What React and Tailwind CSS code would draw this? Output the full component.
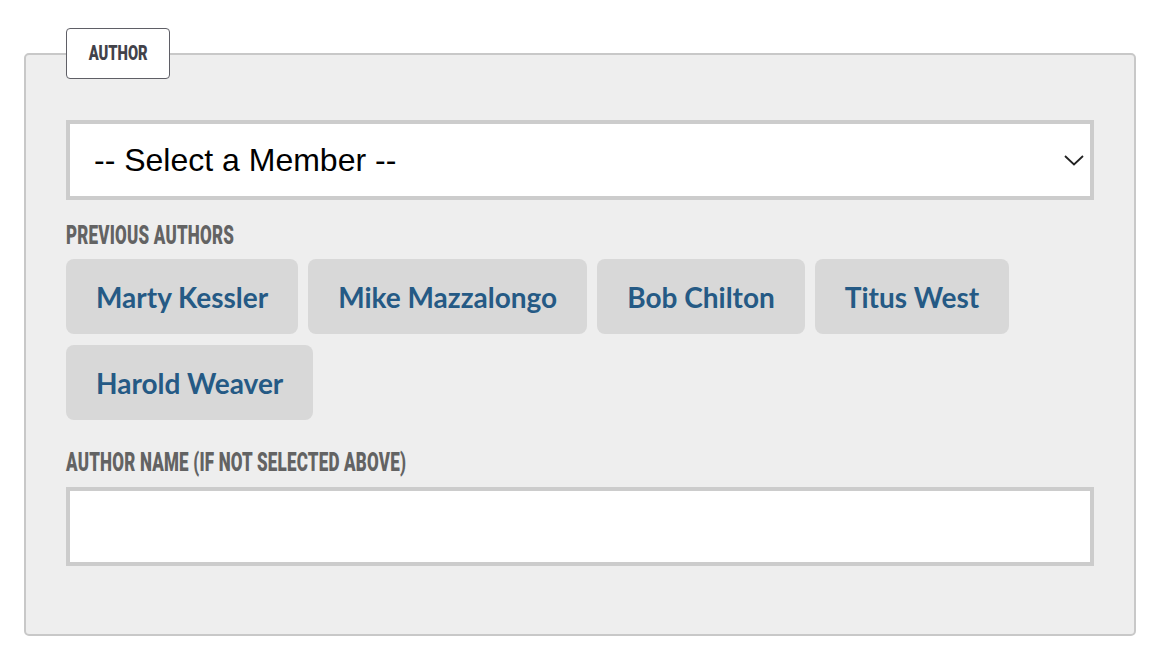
const authors = ["Marty Kessler", "Mike Mazzalongo", "Bob Chilton", "Titus West", "Harold Weaver"];

function Label({ children }) {
  return (
    <div className="h-[25px]">
      <span className="inline-block origin-left scale-x-[0.68] whitespace-nowrap font-['Roboto',sans-serif] font-black text-[25px] leading-[25px] tracking-[0.3px] text-[#636363] uppercase">
        {children}
      </span>
    </div>
  );
}

export default function App() {
  return (
    <div className="w-[1160px] h-[672px] bg-white pt-[53px] px-6">
      {/* author panel */}
      <div className="relative border-2 border-[#c8c8c8] rounded-[5px] bg-[#eeeeee] px-10 pt-[65px] pb-[68px]">
        <div className="absolute -top-[27px] left-10 h-[51px] w-[104px] flex items-center justify-center bg-white border-[1.5px] border-[#5f5f66] rounded-[4px]">
          <span className="inline-block scale-x-[0.7] font-['Roboto',sans-serif] font-black text-[21px] leading-none text-[#42424a]">
            AUTHOR
          </span>
        </div>

        <div className="h-[80px] border-4 border-[#cccccc] bg-white flex items-center justify-between pl-6 pr-1 font-['Liberation_Sans',Arial,sans-serif] text-[32px] text-black">
          <span>-- Select a Member --</span>
          <svg width="24" height="24" viewBox="0 0 24 24" fill="none" stroke="#222" strokeWidth="1.8">
            <path d="M3 8 L12 16.5 L21 8" />
          </svg>
        </div>

        <div className="mt-[23px]">
          <Label>Previous Authors</Label>
        </div>
        <div className="mt-[11px] flex flex-wrap gap-x-[10px] gap-y-[11px]">
          {authors.map((name) => (
            <button
              key={name}
              className="h-[75px] px-[30px] rounded-[8px] bg-[#d8d8d8] font-['Lato',sans-serif] font-bold text-[28px] text-[#255a85]"
            >
              {name}
            </button>
          ))}
        </div>

        <div className="mt-[30px]">
          <Label>Author Name (If not selected above)</Label>
        </div>
        <div className="mt-[12px] h-[79px] border-4 border-[#cccccc] bg-white" />
      </div>
    </div>
  );
}
